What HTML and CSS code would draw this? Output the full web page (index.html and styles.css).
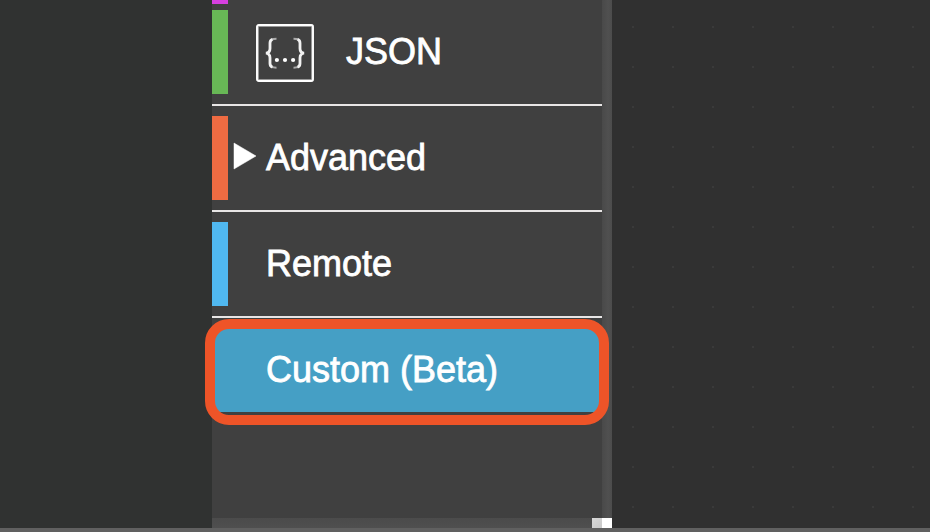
FILE: index.html
```html
<!DOCTYPE html>
<html lang="en">
<head>
<meta charset="utf-8">
<title>Node palette</title>
<link rel="stylesheet" href="styles.css">
</head>
<body>
<div class="workspace">
  <aside class="gutter"></aside>
  <nav class="palette">
    <div class="list">
      <div class="tail"></div>
      <div class="row first">
        <span class="stripe green"></span>
        <svg class="json-icon" viewBox="0 0 58 58">
          <rect x="1.500" y="1.500" width="55" height="55" rx="1.500" fill="none" stroke="#989898" stroke-width="3"/>
          <rect x="1" y="1" width="56" height="56" rx="2" fill="none" stroke="#fff" stroke-width="1.900"/>
          <g fill="none">
            <path stroke="#aaa" stroke-width="2" d="M14 19Q14 14.800 20.500 14.800M14 39.500Q14 43.700 20.500 43.700M44 19Q44 14.800 37.500 14.800M44 39.500Q44 43.700 37.500 43.700"/>
            <path stroke="#f2f2f2" stroke-width="2.800" d="M16.500 15.300Q14 16 14 19V24.500Q14 28.600 10 29.200Q14 29.800 14 34V39.500Q14 42.500 16.500 43.200M41.500 15.300Q44 16 44 19V24.500Q44 28.600 48 29.200Q44 29.800 44 34V39.500Q44 42.500 41.500 43.200"/>
          </g>
          <g fill="#fff"><circle cx="20.900" cy="36" r="2.100"/><circle cx="29" cy="36" r="2.100"/><circle cx="37.100" cy="36" r="2.100"/></g>
        </svg>
        <span class="label json">JSON</span>
      </div>
      <div class="row">
        <span class="stripe orange"></span>
        <svg class="arrow" viewBox="0 0 24 28"><path d="M1 1L23 14L1 27Z" fill="#fff" stroke="#fff" stroke-opacity=".5" stroke-width="1"/></svg>
        <span class="label">Advanced</span>
      </div>
      <div class="row">
        <span class="stripe blue"></span>
        <span class="label indent">Remote</span>
      </div>
      <div class="row custom">
        <span class="label">Custom (Beta)</span>
        <span class="highlight"></span>
      </div>
    </div>
    <div class="vtrack"></div>
    <div class="htrack"><span class="thumb"></span></div>
    <div class="corner"></div>
  </nav>
  <main class="canvas"></main>
</div>
<footer class="edge"></footer>
</body>
</html>
```
FILE: styles.css
```css
* { box-sizing: border-box; }

body {
  margin: 0;
  height: 532px;
  overflow: hidden;
  background: #303030;
  font-family: "Liberation Sans", Arial, sans-serif;
}

.workspace {
  display: grid;
  grid-template-columns: 212px 400px 1fr;
  height: 528px;
}

.gutter { background: #303231; }

.palette {
  display: grid;
  grid-template-columns: 390px 10px;
  grid-template-rows: 518px 10px;
}

.list { background: #404040; }

.vtrack { background: linear-gradient(90deg, #494949, #505050 60%, #4c4c4c); }

.htrack {
  display: flex;
  justify-content: flex-end;
  background: linear-gradient(#4b4b4b, #4f4f4f);
}

.thumb {
  width: 10px;
  background: linear-gradient(135deg, #d8d8d8, #c8c8c8);
}

.corner { background: #fff; }

.canvas {
  background: #303030 radial-gradient(circle at 21px 27px, #3a3a3a 1px, transparent 1.500px) 0 0 / 40px 40px;
}

.edge { height: 4px; background: #606060; }

.tail { width: 16px; height: 4px; background: #d63fe0; }

.row {
  display: flex;
  align-items: center;
  height: 106px;
  padding: 10px 0;
  border-bottom: 2px solid #e8e6e6;
}

.row.first { height: 102px; padding-top: 6px; }

.stripe { width: 16px; height: 84px; }
.green { background: #68b856; }
.orange { background: #ef6b42; }
.blue { background: #50b8f0; }

.json-icon { width: 58px; height: 58px; margin: 2px 0 0 28px; }

.arrow { width: 24px; height: 28px; margin: 0 9px 5px 5px; }

.label {
  color: #fff;
  font-size: 36px;
  line-height: 42px;
  white-space: nowrap;
  -webkit-text-stroke: 0.800px #fff;
}

.label.json { margin-left: 32px; }
.label.indent { margin-left: 38px; }

.row.custom {
  position: relative;
  height: 84px;
  margin-top: 10px;
  padding: 0 0 0 54px;
  border: 0;
  background: #459fc5;
}

.highlight {
  position: absolute;
  top: -9px;
  left: -7px;
  width: 404px;
  height: 106px;
  border: 10px solid #ee5428;
  border-radius: 24px;
}
```
